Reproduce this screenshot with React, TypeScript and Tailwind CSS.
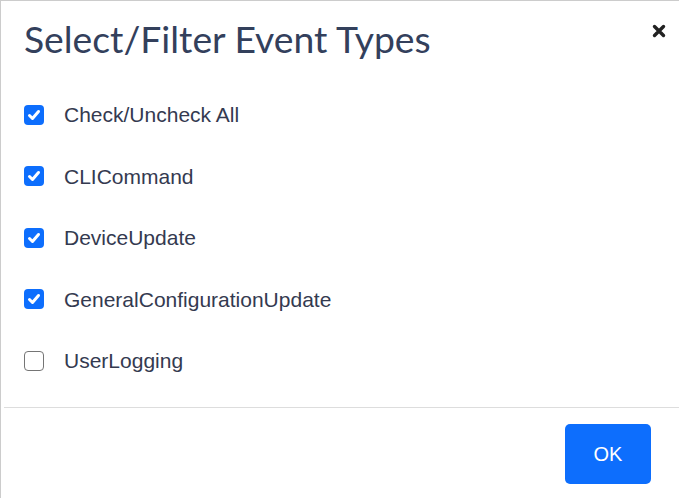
import React, { useState } from 'react';

interface EventType {
  id: string;
  label: string;
}

const eventTypes: EventType[] = [
  { id: 'all', label: 'Check/Uncheck All' },
  { id: 'cli', label: 'CLICommand' },
  { id: 'device', label: 'DeviceUpdate' },
  { id: 'general', label: 'GeneralConfigurationUpdate' },
  { id: 'user', label: 'UserLogging' },
];

const CheckBox = ({ checked }: { checked: boolean }) =>
  checked ? (
    <span className="flex h-[20px] w-[20px] items-center justify-center rounded-[4px] bg-[#0d6efd]">
      <svg viewBox="0 0 20 20" className="h-[20px] w-[20px]">
        <path d="M5.5 10.5l3 3 6-7" fill="none" stroke="#fff" strokeWidth="3" strokeLinecap="round" strokeLinejoin="round" />
      </svg>
    </span>
  ) : (
    <span className="h-[20px] w-[20px] rounded-[4px] border-[1.5px] border-[#757575] bg-white" />
  );

const App = () => {
  const [checked, setChecked] = useState<Record<string, boolean>>({
    all: true,
    cli: true,
    device: true,
    general: true,
    user: false,
  });

  const toggle = (id: string) => setChecked((c) => ({ ...c, [id]: !c[id] }));

  return (
    <div className="h-[498px] w-[679px] overflow-hidden bg-white">
      <div className="flex h-full flex-col border-l border-t border-[#cccccc]">
        {/* header */}
        <div className="flex h-[82px] items-start justify-between pl-[23px] pr-[12px] pt-[14px]">
          <h4 className="font-['Lato','Open_Sans',sans-serif] text-[37.3px] leading-[48px] text-[#33405c]">
            Select/Filter Event Types
          </h4>
          <button className="mt-[8px] flex h-[16px] w-[16px] items-center justify-center">
            <svg viewBox="0 0 14 14" className="h-[14px] w-[14px]">
              <path d="M2.5 2.5l9 9M11.5 2.5l-9 9" stroke="#222" strokeWidth="3.4" strokeLinecap="round" />
            </svg>
          </button>
        </div>

        {/* body */}
        <div className="flex flex-col pt-[1px] font-['Liberation_Sans',Arial,sans-serif]">
          {eventTypes.map((t) => (
            <label
              key={t.id}
              onClick={() => toggle(t.id)}
              className="flex h-[61.5px] cursor-pointer items-center pl-[23px]"
            >
              <CheckBox checked={checked[t.id]} />
              <span className="ml-[20px] text-[21px] text-[#343a50]">{t.label}</span>
            </label>
          ))}
        </div>

        {/* footer */}
        <div className="ml-[3px] mt-[15px] flex justify-end border-t border-[#dddddd] pr-[28px] pt-[16px]">
          <button className="h-[60px] w-[86px] rounded-[5px] bg-[#0d6efd] font-['Liberation_Sans',Arial,sans-serif] text-[20px] text-white">
            OK
          </button>
        </div>
      </div>
    </div>
  );
};

export default App;
